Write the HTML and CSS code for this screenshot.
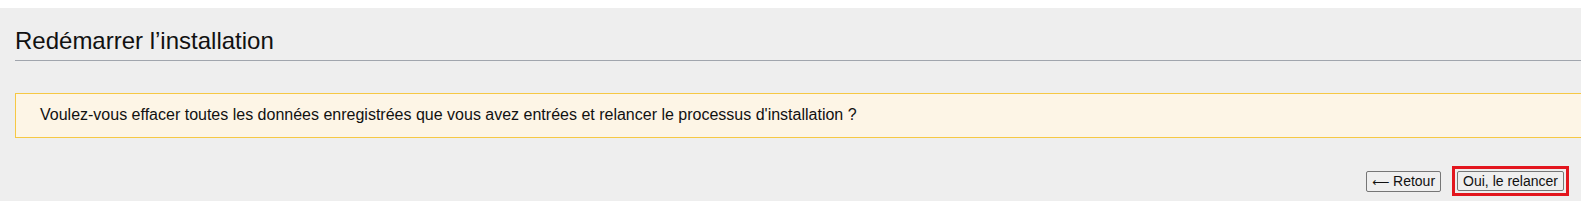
FILE: index.html
```html
<!doctype html>
<html lang="fr">
<head>
    <meta charset="UTF-8">
    <title>Redémarrer l'installation</title>
    <link rel="stylesheet" href="styles.css">
</head>
<body>
<div class="page">
    <h1 class="page-title">Redémarrer l’installation</h1>

    <div class="notice">
        Voulez-vous effacer toutes les données enregistrées que vous avez entrées et relancer le processus d'installation ?
    </div>

    <div class="actions">
        <button class="btn" type="button"><span class="btn-arrow">&#10229;</span> Retour</button>
        <span class="btn-focus"><button class="btn" type="button">Oui, le relancer</button></span>
    </div>
</div>
</body>
</html>
```

FILE: styles.css
```css
* {
    margin: 0;
    padding: 0;
    box-sizing: border-box;
}
body {
    padding-top: 8px;
    background: #fff;
    font-family: "Liberation Sans", Arial, sans-serif;
    color: #111;
}
.page {
    background: #eee;
    padding: 0 0 12px 15px;
    height: 193px;
}
.page-title {
    font-size: 24px;
    font-weight: normal;
    padding-top: 21px;
    padding-bottom: 7px;
    line-height: 24px;
    border-bottom: 1px solid #a0a5ad;
}
.notice {
    margin-top: 32px;
    background: #fdf5e6;
    border: 1px solid #f6c844;
    border-right: none;
    padding: 11px 24px 12px;
    font-size: 16px;
    line-height: 20px;
}
.actions {
    display: flex;
    justify-content: flex-end;
    align-items: center;
    gap: 11px;
    margin-top: 28px;
    padding-right: 12px;
}
.btn {
    font-family: "Liberation Sans", Arial, sans-serif;
    font-size: 14px;
    color: #111;
    background: #efefef;
    border: 1px solid #767676;
    border-radius: 2px;
    padding: 1px 5px;
    line-height: 16px;
}
.btn-arrow {
    font-family: "DejaVu Sans", sans-serif;
    font-size: 12px;
}
.btn-focus {
    display: inline-block;
    border: 3px solid #e3161e;
    padding: 2px;
}
```
